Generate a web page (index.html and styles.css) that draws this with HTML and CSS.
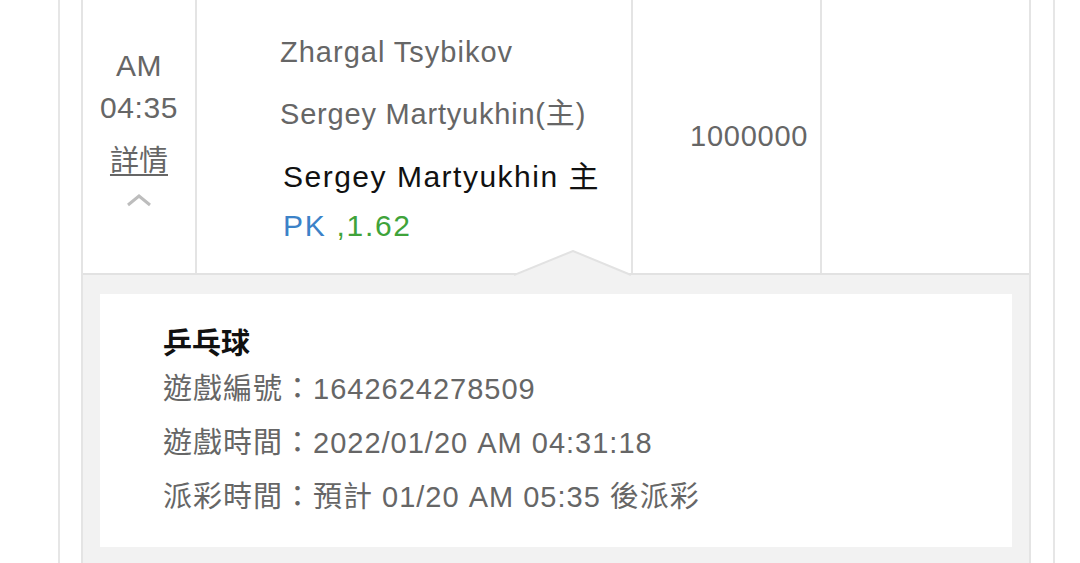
FILE: index.html
```html
<!DOCTYPE html>
<html lang="zh-Hant">
<head>
<meta charset="utf-8">
<title>注單</title>
<link rel="stylesheet" href="styles.css">
</head>
<body>
<div class="outer">
  <div class="table">
    <div class="row">
      <div class="cell c-time">
        <div class="t-line">AM</div>
        <div class="t-line">04:35</div>
        <div class="t-line detail-link">詳情</div>
        <svg class="chev" width="26" height="14" viewBox="0 0 26 14"><polyline points="2,12 13,3 24,12" fill="none" stroke="#bdbdbd" stroke-width="3"/></svg>
      </div>
      <div class="cell c-bet">
        <div class="n-line n1">Zhargal Tsybikov</div>
        <div class="n-line n2">Sergey Martyukhin(主)</div>
        <div class="pick">Sergey Martyukhin 主</div>
        <div class="odds"><span class="pk">PK</span><span class="val"> ,1.62</span></div>
        <svg class="notch" width="118" height="26" viewBox="0 0 118 26"><polygon points="0,25 59,1 117,25" fill="#f2f2f2"/><polyline points="0,25 59,1 117,25" fill="none" stroke="#e2e2e2" stroke-width="2"/></svg>
      </div>
      <div class="cell c-amt">1000000</div>
      <div class="cell c-last"></div>
    </div>
    <div class="expand">
      <div class="info">
        <div class="i-title">乒乓球</div>
        <div class="i-line">遊戲編號：1642624278509</div>
        <div class="i-line">遊戲時間：2022/01/20 AM 04:31:18</div>
        <div class="i-line">派彩時間：預計 01/20 AM 05:35 後派彩</div>
      </div>
    </div>
  </div>
</div>
</body>
</html>
```

FILE: styles.css
```css
html, body {
  margin: 0;
  padding: 0;
  background: #ffffff;
  height: 100%;
  overflow: hidden;
}
body {
  font-family: "Liberation Sans", "Noto Sans CJK TC", sans-serif;
  color: #666666;
}
.outer {
  margin-left: 58px;
  width: 950px;
  border-left: 2px solid #e6e6e6;
  border-right: 2px solid #e6e6e6;
  padding: 0 22px 0 21px;
  min-height: 563px;
}
.table {
  border-left: 2px solid #e4e4e4;
  border-right: 2px solid #e4e4e4;
}
.row {
  display: flex;
  height: 273px;
  border-bottom: 2px solid #e2e2e2;
}
.cell {
  border-right: 2px solid #e4e4e4;
  position: relative;
  box-sizing: border-box;
}
.c-time {
  width: 114px;
  display: flex;
  flex-direction: column;
  align-items: center;
  padding-top: 45px;
}
.t-line {
  font-size: 30px;
  line-height: 42px;
  letter-spacing: 0.6px;
}
.detail-link {
  margin-top: 8px;
  text-decoration: underline;
  text-underline-offset: 3px;
  text-decoration-thickness: 2px;
  font-family: "Noto Sans CJK TC", sans-serif;
  font-size: 29px;
  letter-spacing: 0;
}
.chev {
  margin-top: 14px;
}
.c-bet {
  width: 436px;
  padding-left: 83px;
  padding-top: 32px;
}
.n-line {
  font-size: 29px;
  line-height: 40px;
  letter-spacing: 1px;
}
.n2 {
  margin-top: 22px;
  letter-spacing: 0.8px;
}
.pick {
  margin-top: 23px;
  margin-left: 3px;
  font-size: 30px;
  line-height: 40px;
  color: #111111;
  letter-spacing: 1.5px;
}
.odds {
  margin-top: 9px;
  margin-left: 3px;
  font-size: 30px;
  line-height: 40px;
  letter-spacing: 1.7px;
}
.pk { color: #3c82c8; }
.val { color: #3fa33a; }
.notch {
  position: absolute;
  right: -1px;
  bottom: -3px;
}
.c-amt {
  width: 189px;
  padding-left: 57px;
  display: flex;
  align-items: center;
  font-size: 29px;
  letter-spacing: 0.75px;
}
.c-last {
  flex: 1;
  border-right: none;
}
.expand {
  background: #f2f2f2;
  padding: 19px 17px 20px 17px;
}
.info {
  background: #ffffff;
  padding: 26px 0 23px 63px;
}
.i-title {
  font-family: "Noto Sans CJK TC", sans-serif;
  font-weight: 700;
  font-size: 29px;
  line-height: 42px;
  color: #111111;
}
.i-line {
  font-size: 29px;
  line-height: 54px;
  letter-spacing: 1px;
}
```
